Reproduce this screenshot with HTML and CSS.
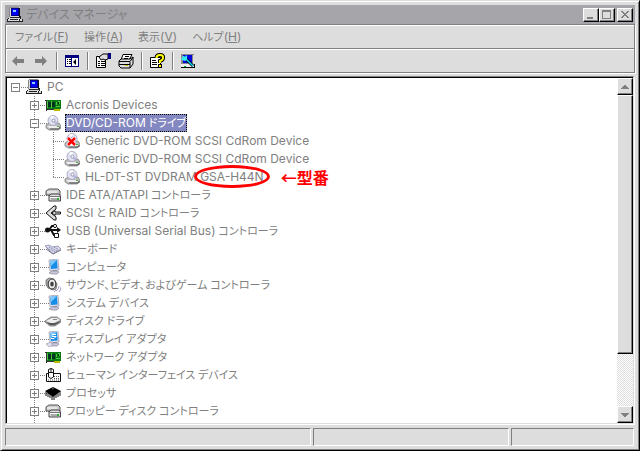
FILE: index.html
```html
<!DOCTYPE html>
<html lang="ja">
<head>
  <meta charset="utf-8">
  <title>デバイス マネージャ</title>
  <link rel="stylesheet" href="styles.css">
</head>
<body>

<!-- アイコン定義 -->
<svg class="defs" aria-hidden="true">
  <symbol id="pc" viewBox="0 0 16 16">
    <path d="M3 0h10v10H3z" fill="#ddd"/><path d="M3 0h9v1H3zM2 1h1v9H2z" fill="#888"/><path d="M12 1h1v9h-1z" fill="#111"/>
    <path d="M4 1h8v8H4z" fill="#000080"/><path d="M5 2h6v6H5z" fill="#00f"/><path d="M6 3h3v2H6z" fill="#8cf"/>
    <path d="M2 10h11v1h1v3H0v-2h1v-1h1z" fill="#ddd"/><path d="M3 10h10v1H3zM1 11h1v1H1zM0 12h1v2H0zM0 14h12v1H0zM3 12h8v1H3z" fill="#222"/>
    <path d="M13 9h1v3h-1zM12 12h4v3h-4z" fill="#222"/><path d="M13 12h2v2h-2z" fill="#ddd"/>
  </symbol>
  <symbol id="card" viewBox="0 0 16 16">
    <path d="M1 3h15v9H1z" fill="#087a12"/><path d="M0 3h2v1H0zM1 3h1v11H1zM2 12h7v1H2z" fill="#333"/>
    <path d="M3 5h3v5H3zM7 5h3v5H7z" fill="#032"/><path d="M11 5h1v3h-1zM13 4h2v3h-2zM11 9h4v1h-4zM6 4h1v7H6zM2 4h1v7H2z" fill="#4cc63a"/><path d="M13 5h1v2h-1z" fill="#021"/>
    <path d="M9 12h6v2H9z" fill="#bb0"/>
  </symbol>
  <symbol id="cd" viewBox="0 0 16 16">
    <path d="M1 10l3-2h10l2 3v2l-3 2H4l-3-2z" fill="#bbb" stroke="#777" stroke-width=".7"/>
    <path d="M2 11h12v2H4z" fill="#eee"/><path d="M5 14h9l1-2" fill="none" stroke="#555"/>
    <circle cx="8" cy="5.500" r="5" fill="#dfe0f2" stroke="#a0a0b4" stroke-width=".8"/>
    <path d="M8 5.500L5 2a5 5 0 0 1 4-1z" fill="#fff"/><path d="M8 6l5 1-2 3z" fill="#b8b8dc"/>
    <circle cx="8.500" cy="5.500" r="1.500" fill="#fff" stroke="#8080a0" stroke-width=".8"/><path d="M12 11h2v1h-2z" fill="#4a4"/>
  </symbol>
  <symbol id="cdx" viewBox="0 0 16 16">
    <use href="#cd"/><path d="M4 5l7 7M11 5l-7 7" stroke="#fff" stroke-width="4"/><path d="M4 5l7 7M11 5l-7 7" stroke="#f00" stroke-width="2.500"/>
  </symbol>
  <symbol id="drives" viewBox="0 0 16 16">
    <path d="M1 4l3-2h9l2 2v4H1z" fill="#ccc" stroke="#555"/><path d="M2 5h10" stroke="#fff"/>
    <path d="M4 9l2-2h8l1.500 2v5H4z" fill="#ddd" stroke="#444"/><path d="M5 9.500h10M6 12h6" stroke="#777"/><path d="M5 10.500h9" stroke="#fff"/><path d="M12 11h2v2h-2z" fill="#3a3"/>
  </symbol>
  <symbol id="scsi" viewBox="0 0 16 16">
    <path d="M11 1L9 1 1 8l8 7h2v-3L6 8l5-4z" fill="#ddd" stroke="#111"/>
    <path d="M7 8l3-2.500V7h5.500v2H10v1.500z" fill="#ddd" stroke="#111"/>
  </symbol>
  <symbol id="usb" viewBox="0 0 16 16">
    <path d="M2 7h12M4 7l3-4h3M6 7l3 5h2" fill="none" stroke="#111" stroke-width="2"/>
    <circle cx="2.500" cy="7" r="2.500" fill="#111"/><path d="M12 4l4 3-4 3z" fill="#111"/>
    <circle cx="10" cy="3" r="1.600" fill="#fff" stroke="#111"/><path d="M9.500 10.500h4v4h-4z" fill="#fff" stroke="#111"/>
  </symbol>
  <symbol id="kbd" viewBox="0 0 16 16">
    <path d="M0 5l4-1 3 2 6-1 3 3-8 5z" fill="#d8d8ec" stroke="#8c8cae" stroke-width=".8"/><path d="M1 8l7 5 8-4" fill="none" stroke="#778"/>
    <path d="M2 7l8 4M4 6l8 4M9 6l5 3" stroke="#777798" stroke-dasharray="1 1"/>
  </symbol>
  <symbol id="mon" viewBox="0 0 16 16">
    <path d="M4 1l9-1 1 11-9 1z" fill="#dcdcec" stroke="#99a" stroke-width=".7"/>
    <path d="M5 2l7-1 .6 8.500L6 10z" fill="#168ee8"/><path d="M5 2l7-1-6 6z" fill="#7ccaff"/>
    <path d="M8 11h4v2H8z" fill="#99a"/><path d="M4 14l3-2h5l2 1-2 2H7z" fill="#c8c8dc" stroke="#889" stroke-width=".7"/>
  </symbol>
  <symbol id="disp" viewBox="0 0 16 16">
    <use href="#mon"/><path d="M7 3.500h4M7 5.500h4M6 7.500h3l2-2" fill="none" stroke="#fff"/><path d="M1 13l5-2 2 3-4 2z" fill="#dde" stroke="#99a" stroke-width=".7"/>
  </symbol>
  <symbol id="snd" viewBox="0 0 16 16">
    <path d="M1 3l3-2 5 1 3 5-1 5-3 1-5-2-2-4z" fill="#aaa" stroke="#666" stroke-width=".8"/>
    <ellipse cx="7" cy="7" rx="3.800" ry="5" fill="#eee" stroke="#333"/><ellipse cx="7" cy="7" rx="1.800" ry="2.500" fill="#444"/>
    <path d="M11 14q3-2 3-5M9 15l2-2M14 15q2-2 2-5" fill="none" stroke="#99c"/>
  </symbol>
  <symbol id="disk" viewBox="0 0 16 16">
    <path d="M0 8l6-4h6l4 3v2l-6 4H5L0 9z" fill="#aaa" stroke="#666" stroke-width=".7"/><path d="M1 8l6-3h5l3 2-6 3H4z" fill="#eee"/>
    <path d="M1 9l5 1h4l5-2v1l-5 3H5z" fill="#555"/><path d="M8 6h4v1H8z" fill="#888"/>
  </symbol>
  <symbol id="hid" viewBox="0 0 16 16">
    <path d="M1.500 6.500h14v8h-14z" fill="#fff" stroke="#111"/><path d="M9 9.500h5M9 11.500h5M3 13h11" stroke="#555" stroke-dasharray="1 1"/>
    <path d="M3.500 2.500q2.500-2 5 0V10q-2.500 3-5 0z" fill="#fff" stroke="#111"/><path d="M4 5.500h4M6 1v4" stroke="#111"/>
  </symbol>
  <symbol id="cpu" viewBox="0 0 16 16">
    <path d="M0 6l8-4 8 4-8 6z" fill="#000"/><path d="M1 7v4M3 8v4M5 9v4M7 11v4M9 11v4M11 9v4M13 8v4M15 6v5" stroke="#111"/><path d="M7 4l2-1" stroke="#777"/>
  </symbol>
</svg>

<main class="window">
  <header class="titlebar">
    <svg class="icon"><use href="#pc"/></svg>
    <h1 class="title">デバイス マネージャ</h1>
    <button class="cap" aria-label="最小化"><svg viewBox="0 0 12 10"><path d="M2 7h6v2H2z"/></svg></button>
    <button class="cap" aria-label="最大化"><svg viewBox="0 0 12 10"><path fill-rule="evenodd" d="M1 0h9v9H1zM2 2v6h7V2z"/></svg></button>
    <button class="cap close" aria-label="閉じる"><svg viewBox="0 0 12 10"><path d="M2 1h2v1h1v1h2V2h1V1h2v1H9v1H8v1H7v1h1v1h1v1h1v1H8V7H7V6H5v1H4v1H2V7h1V6h1V5h1V4H4V3H3V2H2z"/></svg></button>
  </header>

  <div class="bars">
    <nav class="menubar">
      <button class="menu">ファイル<span class="en">(<u>F</u>)</span></button>
      <button class="menu">操作<span class="en">(<u>A</u>)</span></button>
      <button class="menu">表示<span class="en">(<u>V</u>)</span></button>
      <button class="menu">ヘルプ<span class="en">(<u>H</u>)</span></button>
    </nav>
    <div class="toolbar">
      <button class="tool" aria-label="戻る"><svg class="icon" viewBox="0 0 16 16"><path d="M2 8l5-5v3h7v4H7v3z" fill="#808080"/></svg></button>
      <button class="tool" aria-label="進む"><svg class="icon" viewBox="0 0 16 16"><path d="M14 8L9 3v3H2v4h7v3z" fill="#808080"/></svg></button>
      <span class="sep"></span>
      <button class="tool" aria-label="ツリーの表示"><svg class="icon" viewBox="0 0 16 16"><path d="M1 2h14v12H1z" fill="#000080"/><path d="M2 5h5v8H2zM8 5h6v8H8z" fill="#fff"/><path d="M3 6h1v1H3zM3 8h1v1H3zM3 10h1v1H3zM5 6h2v1H5zM5 8h2v1H5zM5 10h2v1H5zM12 6v6L9 9z"/></svg></button>
      <span class="sep"></span>
      <button class="tool" aria-label="プロパティ"><svg class="icon" viewBox="0 0 16 16"><path d="M1.500 3.500h9v11h-9z" fill="#fff" stroke="#000"/><path d="M3 8h2v1H3zM6 8h4v1H6zM3 10h2v1H3zM6 10h4v1H6zM3 12h2v1H3zM6 12h4v1H6z"/><path d="M4 4l4-3h5v5l-3 1-2-1-2 1z" fill="#ddd" stroke="#000"/><path d="M13 0h3v6h-3z" fill="#000080"/></svg></button>
      <button class="tool" aria-label="印刷"><svg class="icon" viewBox="0 0 16 16"><path d="M5 1.500h9L11 7H3z" fill="#fff" stroke="#000"/><path d="M7 3.500h4M6 5.500h4" stroke="#000"/><path d="M1 8l2-2h9l3-2v7l-3 4H3l-2-2z" fill="#ddd" stroke="#000"/><path d="M1 8.500h11l3-4M12 9v6M1 11.500h11" fill="none" stroke="#000"/><path d="M7 12h3v1H7z" fill="#cc0"/></svg></button>
      <span class="sep"></span>
      <button class="tool" aria-label="ヘルプ"><svg class="icon" viewBox="0 0 16 16"><path d="M1.500 4.500h10v10h-10z" fill="#fff" stroke="#000"/><path d="M3 7.500h4M3 9.500h5M3 11.500h5" stroke="#000"/><path d="M7.500 5q0-3 3.500-3t3 3q0 2-3 3v2" fill="none" stroke="#000" stroke-width="4"/><path d="M7.500 5q0-3 3.500-3t3 3q0 2-3 3v2" fill="none" stroke="#ff0" stroke-width="2"/><path d="M9 11h4v4H9z"/><path d="M10 12h2v2h-2z" fill="#ff0"/></svg></button>
      <span class="sep"></span>
      <button class="tool" aria-label="ハードウェア変更のスキャン"><svg class="icon" viewBox="0 0 16 16"><path d="M1 1h12v10H1z" fill="#888"/><path d="M3 2h9v8H3z" fill="#00d"/><path d="M13 1h1v10H2v1h12V2z"/><path d="M1 11h13v3H1z" fill="#eee"/><path d="M1 14h14v1H1zM14 11h1v3h-1z"/><path d="M4 13h2v1H4z" fill="#0b0"/><path d="M5 5l8 8" stroke="#000" stroke-width="3"/><path d="M5 5l8 8" stroke="#0df" stroke-width="1.500"/><path d="M2 3h2l1 1 1-2 1 1v4l-2 1-3-1-1-2h2z" fill="#3ef"/></svg></button>
    </div>
  </div>

  <div class="client">
    <div class="tree">
      <div class="row root"><button class="box minus" aria-label="折りたたむ"></button><svg class="icon"><use href="#pc"/></svg><span class="label en">PC</span></div>
      <ul class="nodes">
        <li class="row"><button class="box" aria-label="展開"></button><svg class="icon"><use href="#card"/></svg><span class="label en">Acronis Devices</span></li>
        <li class="row"><button class="box minus" aria-label="折りたたむ"></button><svg class="icon"><use href="#cd"/></svg><span class="label selected"><span class="en">DVD/CD-ROM</span> ドライブ</span></li>
        <li class="sub">
          <ul class="leaves">
            <li class="row leaf"><svg class="icon"><use href="#cdx"/></svg><span class="label en">Generic DVD-ROM SCSI CdRom Device</span></li>
            <li class="row leaf"><svg class="icon"><use href="#cd"/></svg><span class="label en">Generic DVD-ROM SCSI CdRom Device</span></li>
            <li class="row leaf"><svg class="icon"><use href="#cd"/></svg><span class="label en">HL-DT-ST DVDRAM <span class="model">GSA-H44N</span></span><strong class="note">←型番</strong></li>
          </ul>
        </li>
        <li class="row"><button class="box" aria-label="展開"></button><svg class="icon"><use href="#drives"/></svg><span class="label"><span class="en">IDE ATA/ATAPI</span> コントローラ</span></li>
        <li class="row"><button class="box" aria-label="展開"></button><svg class="icon"><use href="#scsi"/></svg><span class="label"><span class="en">SCSI</span> と <span class="en">RAID</span> コントローラ</span></li>
        <li class="row"><button class="box" aria-label="展開"></button><svg class="icon"><use href="#usb"/></svg><span class="label"><span class="en">USB (Universal Serial Bus)</span> コントローラ</span></li>
        <li class="row"><button class="box" aria-label="展開"></button><svg class="icon"><use href="#kbd"/></svg><span class="label">キーボード</span></li>
        <li class="row"><button class="box" aria-label="展開"></button><svg class="icon"><use href="#mon"/></svg><span class="label">コンピュータ</span></li>
        <li class="row"><button class="box" aria-label="展開"></button><svg class="icon"><use href="#snd"/></svg><span class="label">サウンド、ビデオ、およびゲーム コントローラ</span></li>
        <li class="row"><button class="box" aria-label="展開"></button><svg class="icon"><use href="#mon"/></svg><span class="label">システム デバイス</span></li>
        <li class="row"><button class="box" aria-label="展開"></button><svg class="icon"><use href="#disk"/></svg><span class="label">ディスク ドライブ</span></li>
        <li class="row"><button class="box" aria-label="展開"></button><svg class="icon"><use href="#disp"/></svg><span class="label">ディスプレイ アダプタ</span></li>
        <li class="row"><button class="box" aria-label="展開"></button><svg class="icon"><use href="#card"/></svg><span class="label">ネットワーク アダプタ</span></li>
        <li class="row"><button class="box" aria-label="展開"></button><svg class="icon"><use href="#hid"/></svg><span class="label">ヒューマン インターフェイス デバイス</span></li>
        <li class="row"><button class="box" aria-label="展開"></button><svg class="icon"><use href="#cpu"/></svg><span class="label">プロセッサ</span></li>
        <li class="row"><button class="box" aria-label="展開"></button><svg class="icon"><use href="#drives"/></svg><span class="label">フロッピー ディスク コントローラ</span></li>
        <li class="row"><button class="box" aria-label="展開"></button><svg class="icon"><use href="#disk"/></svg><span class="label">フロッピー ディスク ドライブ</span></li>
      </ul>
    </div>
    <div class="scrollbar">
      <button class="arrow" aria-label="上へ"><svg viewBox="0 0 8 4"><path d="M3 0h2v1h1v1h1v1h1v1H0V3h1V2h1V1h1z"/></svg></button>
      <div class="thumb"></div>
      <button class="arrow down" aria-label="下へ"><svg viewBox="0 0 8 4"><path d="M0 0h8v1H7v1H6v1H5v1H3V3H2V2H1V1H0z"/></svg></button>
    </div>
  </div>

  <footer class="status"><div class="pane"></div><div class="pane"></div><div class="pane"></div></footer>
</main>

</body>
</html>
```
FILE: styles.css
```css
* {
  box-sizing: border-box;
}

body {
  margin: 0;
  font-family: "Noto Sans", "Noto Sans CJK JP", sans-serif;
  font-size: 11px;
  font-feature-settings: "palt";
  line-height: 18px;
  color: #808080;
  overflow: hidden;
}

button {
  margin: 0;
  padding: 0;
  border: 0;
  background: none;
  font: inherit;
  font-feature-settings: inherit;
  color: inherit;
}

ul {
  margin: 0;
  padding: 0;
  list-style: none;
}

/* 英字はかなより少し大きい */
.en {
  font-family: Inter, sans-serif;
  font-size: 12px;
}

.defs {
  display: none;
}

.icon {
  display: block;
  flex: none;
  width: 16px;
  height: 16px;
}

.window {
  display: flex;
  flex-direction: column;
  height: 100vh;
  padding: 3px 4px 4px 3px;
  background: #ddd;
  border: 1px solid;
  border-color: #ddd #000 #000 #ddd;
  box-shadow: inset 1px 1px #fff, inset -1px -1px #808080;
}

/* タイトルバー */
.titlebar {
  display: flex;
  align-items: center;
  height: 19px;
  margin: 1px 0 0 1px;
  padding: 0 2px;
  background: #a6a5aa;
}

.title {
  flex: 1;
  margin: 0 0 0 3px;
  font-size: 12px;
  font-weight: normal;
}

.cap {
  display: flex;
  align-items: center;
  justify-content: center;
  width: 16px;
  height: 14px;
}

.cap svg {
  flex: none;
  width: 12px;
  height: 10px;
  fill: #808080;
}

.close {
  margin-left: 2px;
}

.cap,
.arrow,
.thumb {
  background: #ddd;
  border: 1px solid;
  border-color: #fff #000 #000 #fff;
  box-shadow: inset -1px -1px #808080;
}

/* メニューとツールバー */
.bars {
  margin-left: 1px;
  border: 1px solid #808080;
  box-shadow: inset 1px 1px #fff, 1px 1px #fff;
}

.menubar {
  display: flex;
  align-items: center;
  gap: 15px;
  height: 24px;
  padding: 0 9px;
  border-bottom: 1px solid #808080;
}

.toolbar {
  display: flex;
  align-items: center;
  height: 23px;
  padding: 0 1px;
  border-top: 1px solid #fff;
}

.tool {
  width: 23px;
  padding: 0 3px;
}

.sep {
  width: 2px;
  height: 18px;
  margin: 0 3px;
  border-left: 1px solid #808080;
  border-right: 1px solid #fff;
}

/* ツリー */
.client {
  display: flex;
  flex: 1;
  min-height: 0;
  margin: 3px 1px 4px 1px;
  background: #fff;
  border: 1px solid;
  border-color: #808080 #ddd #ddd #808080;
  box-shadow: inset 1px 1px #000, 1px 1px #fff;
  padding: 1px 0 0 1px;
}

.tree {
  flex: 1;
  overflow: hidden;
  padding-left: 4px;
}

.row {
  display: flex;
  align-items: center;
  height: 18px;
  white-space: nowrap;
  background: repeating-linear-gradient(90deg, #808080 0 1px, transparent 1px 2px) 8px 9px / 12px 1px no-repeat;
}

.row > .icon {
  margin-right: 4px;
}

.box {
  flex: none;
  width: 9px;
  height: 9px;
  margin-right: 6px;
  border: 1px solid #808080;
  background:
    linear-gradient(#808080, #808080) center / 5px 1px no-repeat,
    linear-gradient(#808080, #808080) center / 1px 5px no-repeat,
    #fff;
}

.minus {
  background:
    linear-gradient(#808080, #808080) center / 5px 1px no-repeat,
    #fff;
}

.nodes {
  padding-left: 19px;
  background: repeating-linear-gradient(#808080 0 1px, transparent 1px 2px) 23px 0 / 1px 100% no-repeat;
}

.leaves {
  padding-left: 23px;
  background: repeating-linear-gradient(#808080 0 1px, transparent 1px 2px) 23px 0 / 1px 46px no-repeat;
}

.leaf {
  padding-left: 11px;
  background-position: 0 9px;
}

.label {
  height: 18px;
  padding: 0 1px;
}

.selected {
  color: #fff;
  background: #8488c0;
  outline: 1px dotted #000;
  outline-offset: -1px;
}

.model {
  position: relative;
}

/* 型番を囲む赤丸 */
.model::after {
  content: "";
  position: absolute;
  inset: -4px -6px;
  border: 3px solid #f00;
  border-radius: 50%;
}

.note {
  margin-left: 16px;
  font-family: "Noto Sans CJK JP", sans-serif;
  font-size: 16px;
  color: #f00;
}

/* スクロールバー */
.scrollbar {
  display: flex;
  flex-direction: column;
  width: 16px;
  background: repeating-conic-gradient(#ddd 0 25%, #fff 0 50%) 0 0 / 2px 2px;
}

.arrow {
  display: flex;
  flex: none;
  align-items: center;
  justify-content: center;
  height: 17px;
}

.arrow svg {
  width: 8px;
  height: 4px;
  fill: #808080;
}

.thumb {
  height: 75%;
}

.down {
  margin-top: auto;
}

/* ステータスバー */
.status {
  display: grid;
  grid-template-columns: 306fr 196fr 123fr;
  gap: 2px;
  height: 18px;
  margin: 0 1px;
}

.pane {
  border: 1px solid;
  border-color: #808080 #fff #fff #808080;
}
```
